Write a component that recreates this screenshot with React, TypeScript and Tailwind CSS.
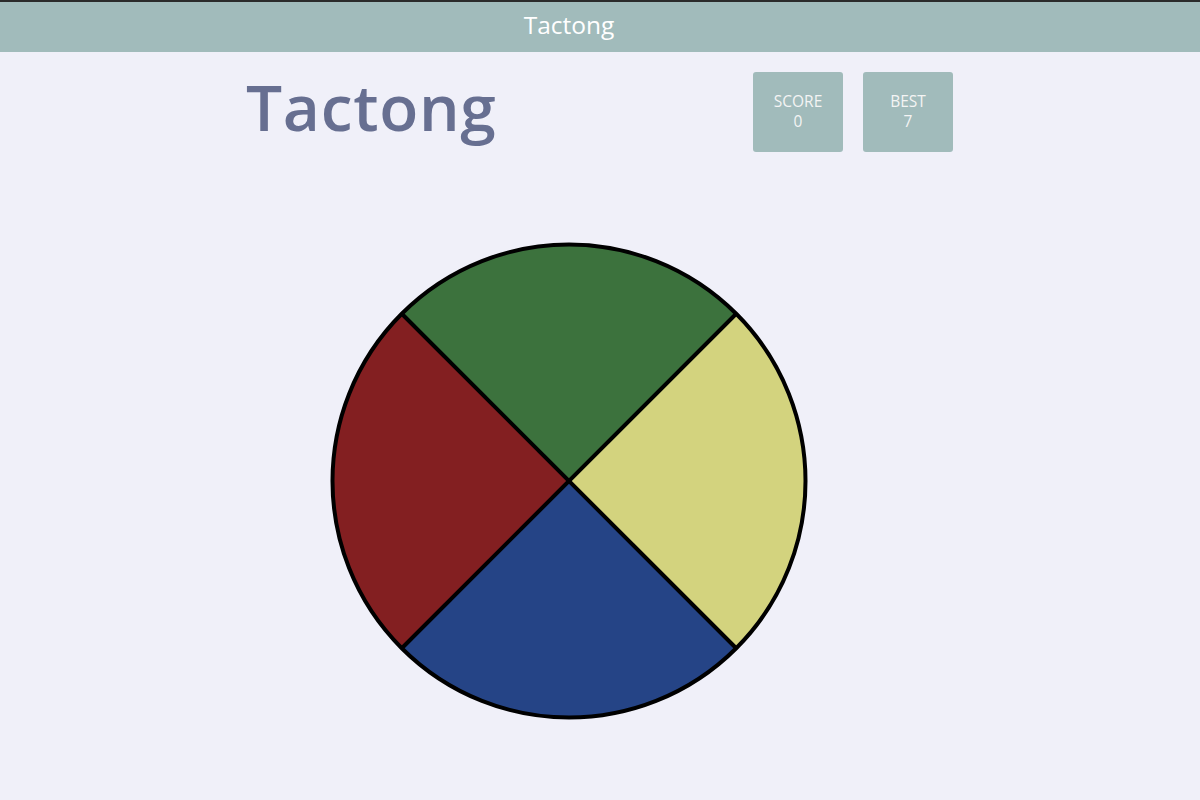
import React from "react";

export default function App() {
  const cx = 240;
  const cy = 240;
  const r = 236.5;
  const d = r * Math.SQRT1_2;
  const p = (sx: number, sy: number) => `${cx + sx * d} ${cy + sy * d}`;
  return (
    <div className="min-h-[800px] w-[1200px] bg-[#f0f0f9]" style={{ fontFamily: '"Open Sans", "DejaVu Sans", sans-serif' }}>
      <div className="h-[52px] border-t-2 border-[#2b2b2b] bg-[#a1bbbb]">
        <div className="flex h-[47px] w-[1138px] items-center justify-center text-[24.5px] text-white">Tactong</div>
      </div>
      <div className="ml-[246px] flex w-[707px] items-start justify-between pt-[20px]">
        <h1 className="-mt-[5px] text-[64px] leading-[80px] font-semibold tracking-[0.7px] text-[#676f91]">Tactong</h1>
        <div className="flex gap-[20px]">
          <div className="flex h-[80px] w-[90px] flex-col items-center justify-center rounded-[3px] bg-[#a1bbbb] pb-[3px] text-[15.5px] leading-[20px] text-[#f4f4f4]">
            <span>SCORE</span>
            <span>0</span>
          </div>
          <div className="flex h-[80px] w-[90px] flex-col items-center justify-center rounded-[3px] bg-[#a1bbbb] pb-[3px] text-[15.5px] leading-[20px] text-[#f4f4f4]">
            <span>BEST</span>
            <span>7</span>
          </div>
        </div>
      </div>
      <div className="flex w-[1138px] justify-center pt-[89px]">
        <svg width="480" height="480" viewBox="0 0 480 480">
          <path d={`M${cx} ${cy} L${p(-1, -1)} A${r} ${r} 0 0 1 ${p(1, -1)} Z`} fill="#3c723d" />
          <path d={`M${cx} ${cy} L${p(1, -1)} A${r} ${r} 0 0 1 ${p(1, 1)} Z`} fill="#d3d37e" />
          <path d={`M${cx} ${cy} L${p(1, 1)} A${r} ${r} 0 0 1 ${p(-1, 1)} Z`} fill="#254486" />
          <path d={`M${cx} ${cy} L${p(-1, 1)} A${r} ${r} 0 0 1 ${p(-1, -1)} Z`} fill="#831f21" />
          <line x1={cx - d} y1={cy - d} x2={cx + d} y2={cy + d} stroke="#000" strokeWidth="4" />
          <line x1={cx + d} y1={cy - d} x2={cx - d} y2={cy + d} stroke="#000" strokeWidth="4" />
          <circle cx={cx} cy={cy} r={r} fill="none" stroke="#000" strokeWidth="4" />
        </svg>
      </div>
    </div>
  );
}
